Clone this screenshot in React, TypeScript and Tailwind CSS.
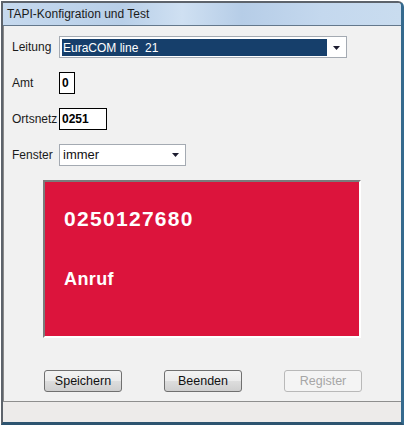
import React from "react";

const Arrow = () => (
  <svg width="7" height="4" viewBox="0 0 7 4">
    <path d="M0 0h7L3.5 4z" fill="#1c1c30" />
  </svg>
);

interface FieldRowProps {
  label: string;
  children: React.ReactNode;
}

const FieldRow: React.FC<FieldRowProps> = ({ label, children }) => (
  <div className="flex h-[22px] items-center">
    <span className="w-[47px] text-[12px] text-[#1a1a1a]">{label}</span>
    {children}
  </div>
);

interface ButtonProps {
  label: string;
  disabled?: boolean;
}

const Button: React.FC<ButtonProps> = ({ label, disabled }) =>
  disabled ? (
    <div className="flex h-[22px] w-[78px] items-center justify-center rounded-[3px] border border-[#b9b9b9] bg-[#f4f4f4] text-[12.5px] text-[#a6a6a6]">
      {label}
    </div>
  ) : (
    <div className="flex h-[22px] w-[78px] items-center justify-center rounded-[3px] border border-[#707070] bg-[linear-gradient(180deg,#f3f3f3_0%,#ebebeb_50%,#dddddd_51%,#cfcfcf_100%)] text-[12.5px] text-[#111]">
      {label}
    </div>
  );

export default function App() {
  return (
    <div className="h-[426px] w-[406px] bg-white pl-[1px] pt-[1px] font-['Liberation_Sans',Arial,sans-serif]">
      <div className="flex h-[424px] w-[403px] flex-col overflow-hidden rounded-tr-[6px] border-l-2 border-t-2 border-r-[3px] border-b-[3px] border-l-[#5d636b] border-t-[#5d636b] border-r-[#356a8e] border-b-[#2d5470]">
        {/* title bar */}
        <div className="flex h-[23px] items-center border-b border-[#64788c] bg-[linear-gradient(90deg,#c6d9ee_0%,#b8cfe8_30%,#cfe0f2_45%,#b6cde7_60%,#c4d8ee_80%,#c9dcef_100%)] pl-[4px] text-[12px] text-[#1b1b1b]">
          TAPI-Konfigration und Test
        </div>

        {/* content */}
        <div className="flex flex-1 flex-col border-l border-[#8a8a8a] bg-[#f1f1f1] pl-[8px] pt-[10px]">
          <div className="flex flex-col gap-[14px]">
            <FieldRow label="Leitung">
              <div className="flex h-[22px] w-[288px] border border-[#a4aab2] bg-white pl-[2px] pt-[2px] pb-[1px]">
                <div className="flex w-[265px] items-center bg-[#163f6b] pl-[1px] text-[12px] whitespace-pre text-white">
                  EuraCOM line  21
                </div>
                <div className="flex flex-1 items-center justify-center">
                  <Arrow />
                </div>
              </div>
            </FieldRow>
            <FieldRow label="Amt">
              <div className="flex h-[22px] w-[16px] items-center border border-black bg-white pl-[2px] text-[12px] font-bold text-black">
                0
              </div>
            </FieldRow>
            <FieldRow label="Ortsnetz">
              <div className="flex h-[22px] w-[48px] items-center border border-black bg-white pl-[2px] text-[12px] font-bold text-black">
                0251
              </div>
            </FieldRow>
            <FieldRow label="Fenster">
              <div className="flex h-[22px] w-[127px] items-center justify-between border border-[#a4aab2] bg-white pl-[3px] pr-[6px] text-[13px] text-[#111]">
                immer
                <Arrow />
              </div>
            </FieldRow>
          </div>

          {/* caller panel */}
          <div className="ml-[31px] mt-[14px] flex h-[158px] w-[318px] flex-col border-2 border-t-[#7b7b7b] border-l-[#7b7b7b] border-b-white border-r-white bg-[#dc143c] pl-[19px] pt-[26px] font-bold text-white">
            <div className="text-[21px] leading-[22px] tracking-[1.3px]">0250127680</div>
            <div className="mt-[40px] text-[18px] leading-[19px] tracking-[0.4px]">Anruf</div>
          </div>

          <div className="ml-[32px] mt-[32px] flex gap-[42px]">
            <Button label="Speichern" />
            <Button label="Beenden" />
            <Button label="Register" disabled />
          </div>
        </div>

        {/* status bar */}
        <div className="h-[21px] border-t border-[#8e8e8e] bg-[#edebea]" />
      </div>
    </div>
  );
}
